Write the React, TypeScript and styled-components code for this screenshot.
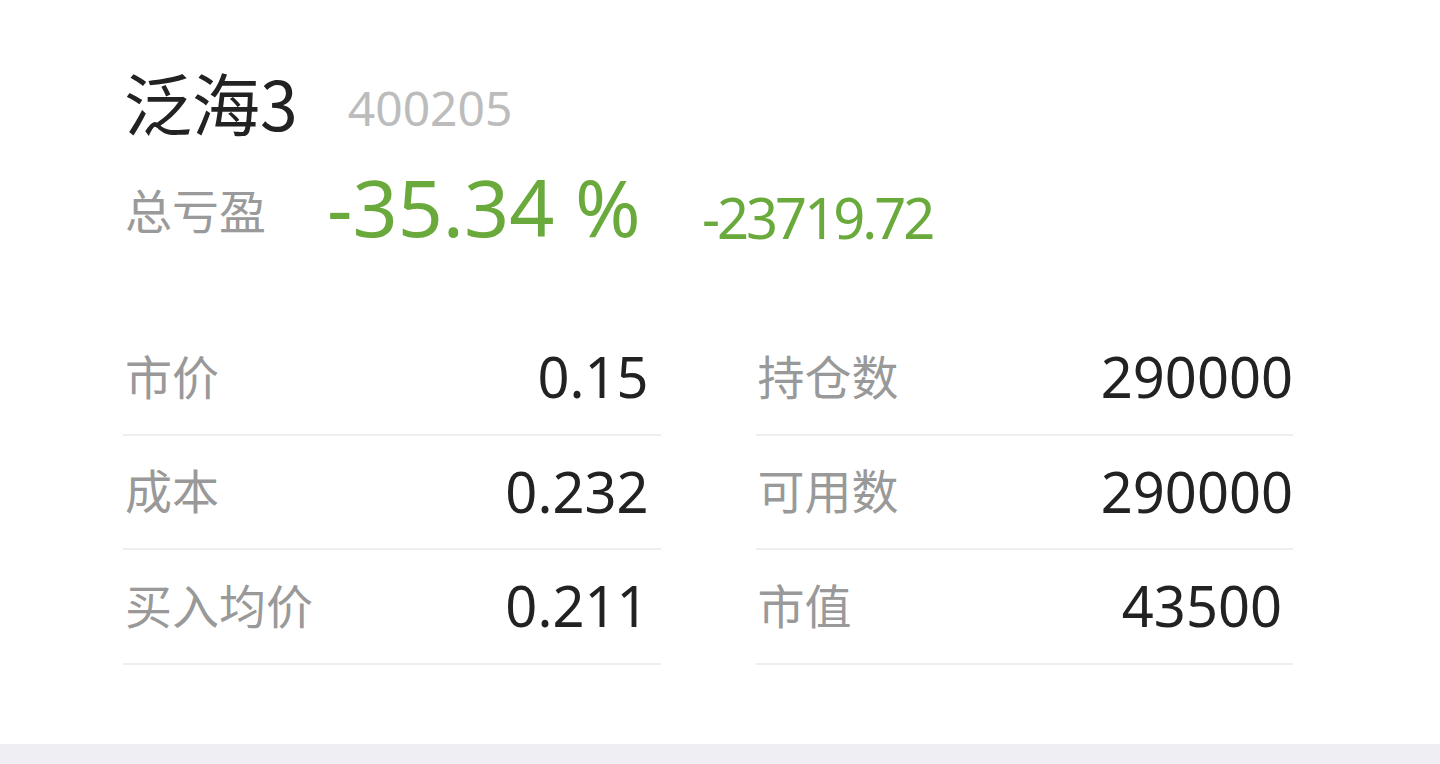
import React from "react";
import styled, { createGlobalStyle } from "styled-components";

const Global = createGlobalStyle`
  html, body { margin: 0; padding: 0; background: #efeef3; }
  body { font-family: "Noto Sans", "Noto Sans CJK SC", sans-serif; }
`;

const Card = styled.div`
  background: #ffffff;
  height: 744px;
  box-sizing: border-box;
  padding: 60px 147px 0 123px;
`;

const TitleRow = styled.div`
  line-height: 84px;
  height: 84px;
  white-space: nowrap;
`;

const Name = styled.span`
  display: inline-block;
  font-family: "Noto Sans CJK SC", sans-serif;
  font-size: 68px;
  line-height: 84px;
  color: #222222;
  padding-left: 1px;
`;

const Code = styled.span`
  display: inline-block;
  font-family: "Noto Sans", sans-serif;
  font-size: 48px;
  line-height: 48px;
  color: #bcbcbc;
  margin-left: 50px;
  vertical-align: 5px;
`;

const ProfitRow = styled.div`
  line-height: 96px;
  height: 96px;
  margin-top: 15px;
  white-space: nowrap;
`;

const ProfitLabel = styled.span`
  display: inline-block;
  font-family: "Noto Sans CJK SC", sans-serif;
  font-size: 47px;
  line-height: 60px;
  color: #9a9a9a;
  width: 202px;
  padding-left: 2px;
  vertical-align: 8px;
`;

const Percent = styled.span`
  display: inline-block;
  font-family: "Noto Sans", sans-serif;
  font-size: 79px;
  line-height: 96px;
  color: #6aaa3c;
  width: 375px;
`;

const Amount = styled.span`
  display: inline-block;
  font-family: "Noto Sans", sans-serif;
  font-size: 56px;
  line-height: 60px;
  letter-spacing: -3px;
  color: #6aaa3c;
  vertical-align: -2px;
`;

const Grid = styled.div`
  display: grid;
  grid-template-columns: 1fr 1fr;
  column-gap: 95px;
  margin-top: 66px;
`;

const Column = styled.div`
  display: flex;
  flex-direction: column;
`;

const Row = styled.div`
  display: flex;
  align-items: center;
  justify-content: space-between;
  height: 114.5px;
  box-sizing: border-box;
  border-bottom: 2px solid #eeeeee;
  padding-bottom: 2px;
`;

const Label = styled.div`
  font-family: "Noto Sans CJK SC", sans-serif;
  font-size: 47px;
  color: #999999;
  padding-left: 2px;
  margin-top: -4px;
`;

const Value = styled.div<{ $pad: number }>`
  font-family: "Noto Sans", sans-serif;
  font-size: 56px;
  color: #222222;
  padding-right: ${(p) => p.$pad}px;
`;

const left = [
  { k: "市价", v: "0.15", pad: 12 },
  { k: "成本", v: "0.232", pad: 12 },
  { k: "买入均价", v: "0.211", pad: 12 },
];
const right = [
  { k: "持仓数", v: "290000", pad: 0 },
  { k: "可用数", v: "290000", pad: 0 },
  { k: "市值", v: "43500", pad: 11 },
];

export default function App() {
  return (
    <>
      <Global />
      <Card>
        <TitleRow>
          <Name>泛海3</Name>
          <Code>400205</Code>
        </TitleRow>
        <ProfitRow>
          <ProfitLabel>总亏盈</ProfitLabel>
          <Percent>-35.34 %</Percent>
          <Amount>-23719.72</Amount>
        </ProfitRow>
        <Grid>
          {[left, right].map((col, i) => (
            <Column key={i}>
              {col.map((r) => (
                <Row key={r.k}>
                  <Label>{r.k}</Label>
                  <Value $pad={r.pad}>{r.v}</Value>
                </Row>
              ))}
            </Column>
          ))}
        </Grid>
      </Card>
    </>
  );
}
